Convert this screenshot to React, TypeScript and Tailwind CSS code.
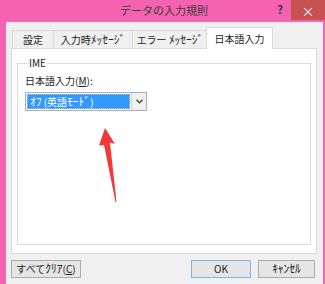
const H = ({ children }: { children: React.ReactNode }) => (
  <span className="text-[11.5px]">{children}</span>
);

export default function App() {
  return (
    <div
      className="relative flex h-[284px] w-[325px] flex-col overflow-hidden bg-[#f462b0] text-[10px] leading-none text-[#1e1e1e]"
      style={{ fontFamily: '"Noto Sans CJK JP", "Liberation Sans", sans-serif' }}
    >
      {/* title bar */}
      <div className="flex h-[22px] shrink-0 items-start">
        <div className="flex-1 pl-[56px] pt-[5px] text-center text-[11px] text-[#3c3c3c]">データの入力規則</div>
        <div className="w-[16px] pt-[4px] text-center text-[11px] font-bold text-[#333]">?</div>
        <div className="w-[3px]" />
        <div className="flex h-[20px] w-[34px] items-center justify-center bg-[#c75050] text-[13px] text-white">
          ×
        </div>
      </div>

      {/* body */}
      <div className="ml-[6px] mr-[2px] flex flex-1 flex-col bg-[#f0f0f0] pl-[5px] pr-[6px] pt-[5px]">
        <div className="ml-[1px] flex h-[21px] items-end">
          <div className="flex h-[18px] w-[42px] items-center justify-center border border-b-0 border-[#d9d9d9] bg-[#f0f0f0] text-[#222]">
            設定
          </div>
          <div className="-ml-px flex h-[18px] w-[80px] items-center justify-center border border-b-0 border-[#d9d9d9] bg-[#f0f0f0] text-[#222]">
            <span>
              入力時<H>ﾒｯｾｰｼﾞ</H>
            </span>
          </div>
          <div className="-ml-px flex h-[18px] w-[76px] items-center justify-center border border-b-0 border-[#d9d9d9] bg-[#f0f0f0] text-[#222]">
            <span>
              エラー&nbsp;<H>ﾒｯｾｰｼﾞ</H>
            </span>
          </div>
          <div className="relative z-10 -mb-px -ml-[2px] flex h-[22px] w-[67px] items-center justify-center border border-b-0 border-[#d9d9d9] bg-white text-[#222]">
            日本語入力
          </div>
        </div>

        <div className="h-[206px] border border-[#d9d9d9] bg-white px-[5px] pt-[9px]">
          <fieldset className="h-[187px] border border-[#dcdcdc] px-[7px]">
            <legend className="ml-[3px] px-[1px] text-[10px] text-[#222]">IME</legend>
            <div className="mt-[8px] text-[#222]">
              日本語入力(<span className="underline">M</span>):
            </div>
            <div className="mt-[6px] flex h-[19px] w-[122px] border border-[#abadb3] bg-white">
              <div className="flex-1 p-[1px]">
                <div className="flex h-full items-center border border-dotted border-[#c0c0c0] bg-[#3399ff] pl-[2px] text-white">
                  <span>
                    <H>ｵﾌ</H>&nbsp;(英語<H>ﾓｰﾄﾞ</H>)
                  </span>
                </div>
              </div>
              <div className="flex w-[15px] items-center justify-center border-l border-[#d0d0d0] bg-[#f0f0f0]">
                <svg width="7" height="5" viewBox="0 0 7 5">
                  <path d="M0.5 0.8 L3.5 3.8 L6.5 0.8" fill="none" stroke="#444" strokeWidth="1.3" />
                </svg>
              </div>
            </div>
          </fieldset>
        </div>

        <div className="mr-[2px] mt-[6px] flex items-center">
          <div className="flex h-[18px] w-[70px] items-center justify-center border border-[#acacac] bg-[#e5e5e5] text-[#222]">
            <span>
              すべて<H>ｸﾘｱ</H>(<span className="underline">C</span>)
            </span>
          </div>
          <div className="flex-1" />
          <div className="flex h-[18px] w-[60px] items-center justify-center border border-[#7eb4ea] bg-[#e5e5e5] text-[#222]">
            OK
          </div>
          <div className="ml-[7px] flex h-[18px] w-[57px] items-center justify-center border border-[#acacac] bg-[#e5e5e5] text-[#222]">
            <H>ｷｬﾝｾﾙ</H>
          </div>
        </div>
      </div>

      {/* red annotation arrow */}
      <svg className="absolute left-0 top-0" width="325" height="284" viewBox="0 0 325 284">
        <polygon points="105,128 115,144 110,142.5 116.5,202 115.5,202 104,145 99,145.5" fill="#f03a3a" />
      </svg>
    </div>
  );
}
